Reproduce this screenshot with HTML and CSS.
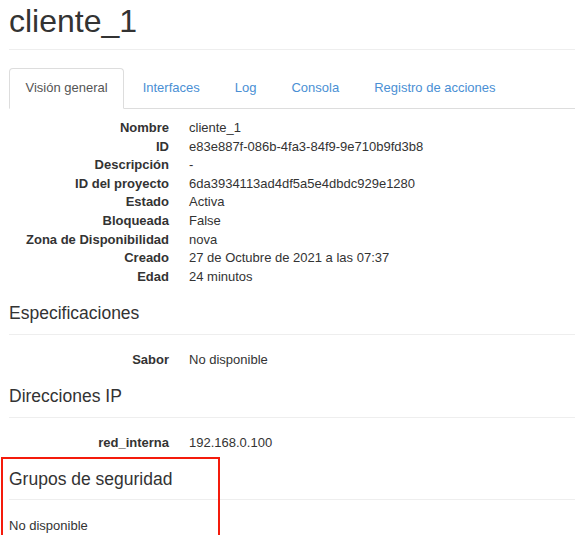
FILE: index.html
```
<!DOCTYPE html>
<html lang="es">
<head>
<meta charset="utf-8">
<title>cliente_1</title>
<link rel="stylesheet" href="styles.css">
</head>
<body>
<div class="page">
  <div class="page-header"><h1>cliente_1</h1></div>
  <ul class="nav-tabs">
    <li class="active"><a>Visión general</a></li>
    <li><a>Interfaces</a></li>
    <li><a>Log</a></li>
    <li><a>Consola</a></li>
    <li><a>Registro de acciones</a></li>
  </ul>
  <div class="detail">
    <dl class="dl-horizontal first">
      <dt>Nombre</dt><dd>cliente_1</dd>
      <dt>ID</dt><dd>e83e887f-086b-4fa3-84f9-9e710b9fd3b8</dd>
      <dt>Descripción</dt><dd>-</dd>
      <dt>ID del proyecto</dt><dd>6da3934113ad4df5a5e4dbdc929e1280</dd>
      <dt>Estado</dt><dd>Activa</dd>
      <dt>Bloqueada</dt><dd>False</dd>
      <dt>Zona de Disponibilidad</dt><dd>nova</dd>
      <dt>Creado</dt><dd>27 de Octubre de 2021 a las 07:37</dd>
      <dt>Edad</dt><dd>24 minutos</dd>
    </dl>
    <h4>Especificaciones</h4>
    <hr>
    <dl class="dl-horizontal">
      <dt>Sabor</dt><dd>No disponible</dd>
    </dl>
    <h4>Direcciones IP</h4>
    <hr>
    <dl class="dl-horizontal">
      <dt>red_interna</dt><dd>192.168.0.100</dd>
    </dl>
    <div class="highlighted">
      <h4>Grupos de seguridad</h4>
      <hr>
      <p class="plain">No disponible</p>
      <div class="mark"></div>
    </div>
  </div>
</div>
</body>
</html>
```
FILE: styles.css
```
* { box-sizing: border-box; }
html, body { margin: 0; padding: 0; background: #fff; }
body {
  font-family: "Liberation Sans", Arial, sans-serif;
  font-size: 13px;
  line-height: 1.428;
  color: #333;
}
.page { padding: 0 0 0 9px; }
.page-header { border-bottom: 1px solid #eee; padding: 1px 0 0 0; height: 50px; }
.page-header h1 {
  margin: 0;
  font-size: 32px;
  font-weight: normal;
  line-height: 40px;
  color: #333;
}
.nav-tabs {
  list-style: none;
  margin: 18px 0 0 0;
  padding: 0;
  display: flex;
  border-bottom: 1px solid #ddd;
}
.nav-tabs li { margin-right: 2px; margin-bottom: -1px; }
.nav-tabs a {
  display: block;
  padding: 10px 15.5px 11px 15.5px;
  border: 1px solid transparent;
  border-radius: 4px 4px 0 0;
  color: #4a8fd4;
  line-height: 18px;
}
.nav-tabs li.active a {
  color: #555;
  border-color: #ddd #ddd transparent #ddd;
  background: #fff;
}
.detail { padding-top: 10px; }
.dl-horizontal {
  display: grid;
  grid-template-columns: 160px 1fr;
  column-gap: 20px;
  margin: 0;
}
.dl-horizontal dt {
  font-weight: bold;
  text-align: right;
  white-space: nowrap;
  line-height: 18.6px;
}
.dl-horizontal dd { margin: 0; line-height: 18.6px; }
h4 {
  font-size: 17.5px;
  font-weight: normal;
  line-height: 20px;
  margin: 17px 0 0 0;
  color: #333;
}
hr {
  border: 0;
  border-top: 1px solid #eee;
  margin: 10.5px 0 16px 0;
}
.highlighted { position: relative; margin-top: 16px; }
.highlighted h4 { margin-top: 0; }
.highlighted hr { margin-bottom: 16.5px; }
.plain { margin: 0; line-height: 18.6px; }
.mark {
  position: absolute;
  left: -8px;
  top: -12px;
  width: 219px;
  height: 84px;
  border: 2px solid #f41b0c;
}
```
